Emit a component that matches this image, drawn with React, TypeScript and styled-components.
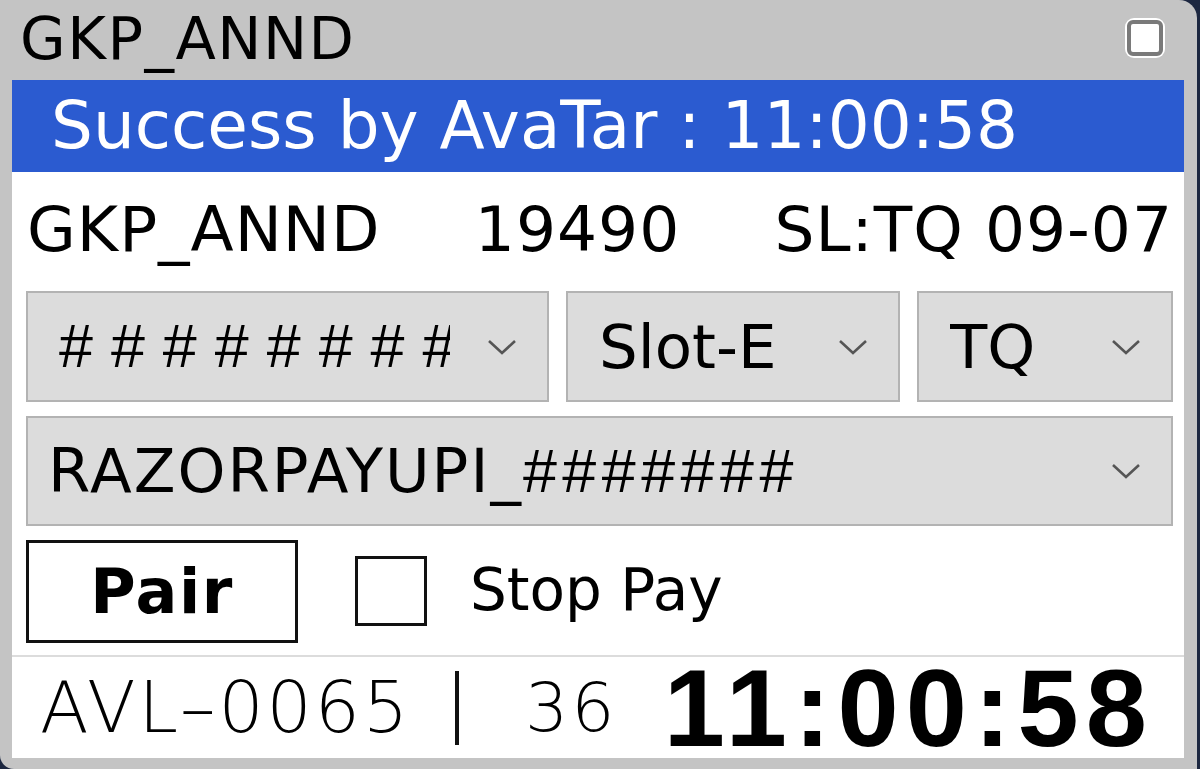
import styled, { createGlobalStyle } from 'styled-components';

const GlobalStyle = createGlobalStyle`
  html, body {
    margin: 0;
    padding: 0;
    background: #1c2740;
  }
  * {
    box-sizing: border-box;
  }
`;

const font = `"DejaVu Sans", "Liberation Sans", sans-serif`;
const arial = `"Liberation Sans", Arial, sans-serif`;

const Window = styled.div`
  width: 1197px;
  height: 769px;
  background: #c4c4c4;
  border-radius: 0 18px 0 14px;
  display: flex;
  flex-direction: column;
  padding: 0 13px 11px 12px;
  font-family: ${font};
  color: #000;
  overflow: hidden;
`;

const TitleBar = styled.div`
  height: 80px;
  display: flex;
  align-items: center;
  justify-content: space-between;
  padding: 0 19px 0 8px;
  flex-shrink: 0;
`;

const TitleText = styled.div`
  font-size: 59px;
  letter-spacing: 1.5px;
  line-height: 1;
  margin-top: -4px;
`;

const MaxButton = styled.div`
  width: 40px;
  height: 40px;
  background: #fff;
  border-radius: 9px;
  display: flex;
  align-items: center;
  justify-content: center;
  margin-top: -4px;

  &::after {
    content: '';
    width: 28px;
    height: 28px;
    border: 4px solid #7a7a7a;
    border-radius: 6px;
  }
`;

const Body = styled.div`
  flex: 1;
  min-height: 0;
  background: #fff;
  display: flex;
  flex-direction: column;
`;

const Banner = styled.div`
  height: 92px;
  background: #2b5bd0;
  color: #fff;
  font-size: 66px;
  display: flex;
  align-items: center;
  padding-left: 39px;
  line-height: 1;
  flex-shrink: 0;
`;

const Controls = styled.div`
  display: flex;
  flex-direction: column;
  gap: 14px;
  padding: 0 11px 12px 14px;
  border-bottom: 2px solid #dcdcdc;
  flex-shrink: 0;
`;

const InfoRow = styled.div`
  height: 105px;
  display: flex;
  align-items: center;
  justify-content: space-between;
  font-size: 63px;
  letter-spacing: 1px;
  line-height: 1;
  padding: 10px 0 0 1px;
`;

const SelectGrid = styled.div`
  display: grid;
  grid-template-columns: 523px 334px 1fr;
  column-gap: 17px;
`;

const Select = styled.div<{ $tall?: number }>`
  height: ${p => p.$tall ?? 111}px;
  background: #dcdcdc;
  border: 2px solid #b3b3b3;
  display: flex;
  align-items: center;
  padding: 0 30px 0 ${p => (p.$tall ? 20 : 31)}px;
  gap: ${p => (p.$tall ? 22 : 37)}px;
  font-size: 61px;
  line-height: 1.3;
`;

const SelectText = styled.div<{ $spacing?: number }>`
  flex: 1;
  min-width: 0;
  overflow: hidden;
  white-space: nowrap;
  letter-spacing: ${p => p.$spacing ?? 0}px;
`;

const Hashes = styled.span<{ $spacing: number }>`
  font-family: ${arial};
  letter-spacing: ${p => p.$spacing}px;
`;

const Chevron = () => (
  <svg width="30" height="18" viewBox="0 0 30 18" fill="none">
    <polyline points="2,3 15,15 28,3" stroke="#555" strokeWidth="2.6" />
  </svg>
);

const ActionRow = styled.div`
  display: flex;
  align-items: center;
  height: 103px;
`;

const PairButton = styled.button`
  width: 272px;
  height: 103px;
  background: #fff;
  border: 3px solid #111;
  font-family: ${font};
  font-weight: bold;
  font-size: 62px;
  letter-spacing: 1.5px;
  color: #000;
  padding: 0;
  margin-right: 57px;
  cursor: pointer;
`;

const CheckBox = styled.div`
  width: 72px;
  height: 70px;
  border: 3px solid #111;
  margin-right: 43px;
  margin-top: -2px;
`;

const CheckLabel = styled.div`
  font-size: 58px;
  line-height: 1;
  margin-top: -4px;
`;

const StatusRow = styled.div`
  flex: 1;
  min-height: 0;
  display: flex;
  align-items: center;
  padding: 0 0 0 28px;
  line-height: 1;
  white-space: nowrap;
`;

const LightText = styled.span<{ $size: number }>`
  font-size: ${p => p.$size}px;
  font-weight: 200;
  letter-spacing: 3px;
`;

const Divider = styled.span`
  width: 4px;
  height: 74px;
  background: #111;
  margin: 0 66px 0 44px;
`;

const Clock = styled.span`
  font-family: ${arial};
  font-weight: bold;
  font-size: 110px;
  line-height: 0.9;
  letter-spacing: 7px;
  margin-left: 46px;
`;

export default function App() {
  return (
    <>
      <GlobalStyle />
      <Window>
        <TitleBar>
          <TitleText>GKP_ANND</TitleText>
          <MaxButton />
        </TitleBar>
        <Body>
          <Banner>Success by AvaTar : 11:00:58</Banner>
          <Controls>
            <InfoRow>
              <span>GKP_ANND</span>
              <span>19490</span>
              <span>SL:TQ 09-07</span>
            </InfoRow>
            <SelectGrid>
              <Select>
                <SelectText>
                  <Hashes $spacing={18}>########</Hashes>
                </SelectText>
                <Chevron />
              </Select>
              <Select>
                <SelectText>Slot-E</SelectText>
                <Chevron />
              </Select>
              <Select>
                <SelectText>TQ</SelectText>
                <Chevron />
              </Select>
            </SelectGrid>
            <Select $tall={110}>
              <SelectText $spacing={2}>
                RAZORPAYUPI_<Hashes $spacing={5.5}>#######</Hashes>
              </SelectText>
              <Chevron />
            </Select>
            <ActionRow>
              <PairButton>Pair</PairButton>
              <CheckBox />
              <CheckLabel>Stop Pay</CheckLabel>
            </ActionRow>
          </Controls>
          <StatusRow>
            <LightText $size={71}>AVL–0065</LightText>
            <Divider />
            <LightText $size={68}>36</LightText>
            <Clock>11:00:58</Clock>
          </StatusRow>
        </Body>
      </Window>
    </>
  );
}
